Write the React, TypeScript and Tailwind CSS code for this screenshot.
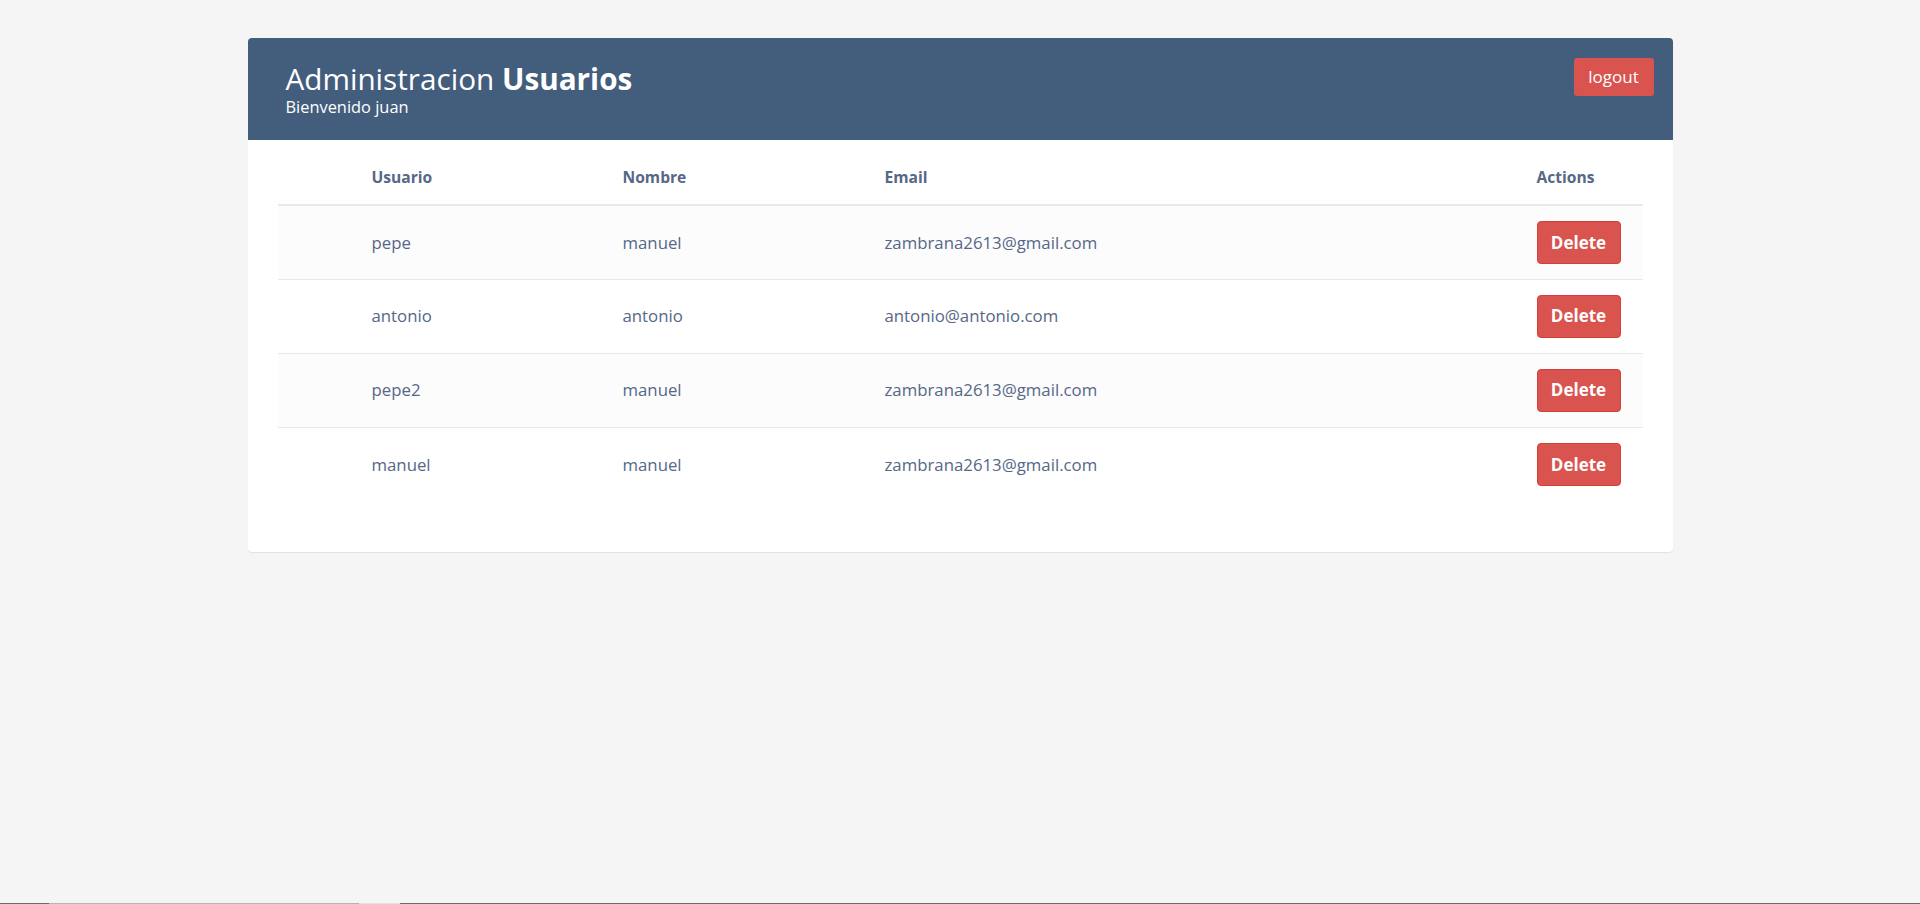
const users = [
  { usuario: "pepe", nombre: "manuel", email: "zambrana2613@gmail.com" },
  { usuario: "antonio", nombre: "antonio", email: "antonio@antonio.com" },
  { usuario: "pepe2", nombre: "manuel", email: "zambrana2613@gmail.com" },
  { usuario: "manuel", nombre: "manuel", email: "zambrana2613@gmail.com" },
];

function Header() {
  return (
    <div className="-mx-[30px] flex h-[102px] justify-between rounded-t-[4px] bg-[#435d7d] pl-[38px] pr-[19px] text-white">
      <div className="pt-[23px]">
        <h2 className="text-[29.7px] leading-[36px]">
          Administracion <b className="font-bold">Usuarios</b>
        </h2>
        <p className="text-[16.4px] leading-[20px]">Bienvenido juan</p>
      </div>
      <div className="pt-[20px]">
        <button className="h-[38px] w-[80px] rounded-[3px] bg-[#d9534f] text-[17px] text-white">
          logout
        </button>
      </div>
    </div>
  );
}

function UsersTable() {
  return (
    <table className="mt-[12px] w-full table-fixed border-collapse text-left text-[16.8px]">
      <colgroup>
        <col className="w-[76px]" />
        <col className="w-[251px]" />
        <col className="w-[262px]" />
        <col />
        <col className="w-[124px]" />
      </colgroup>
      <thead>
        <tr className="border-b-[2px] border-[#e9e9e9] text-[15.6px]">
          <th />
          <th className="h-[53px] px-[18px] font-bold">Usuario</th>
          <th className="px-[18px] font-bold">Nombre</th>
          <th className="px-[18px] font-bold">Email</th>
          <th className="px-[18px] font-bold">Actions</th>
        </tr>
      </thead>
      <tbody>
        {users.map((u, i) => (
          <tr
            key={u.usuario}
            className={
              (i % 2 === 0 ? "bg-[#fcfcfc] " : "bg-white ") +
              (i > 0 ? "border-t border-[#e9e9e9]" : "")
            }
          >
            <td className="h-[74px]" />
            <td className="px-[18px]">{u.usuario}</td>
            <td className="px-[18px]">{u.nombre}</td>
            <td className="px-[18px]">{u.email}</td>
            <td className="px-[18px]">
              <button className="h-[43px] w-[84px] rounded-[4px] border border-[#d43f3a] bg-[#d9534f] text-[17px] font-bold text-white">
                Delete
              </button>
            </td>
          </tr>
        ))}
      </tbody>
    </table>
  );
}

export default function App() {
  return (
    <div className="min-h-screen bg-[#f5f5f5] font-['Open_Sans',sans-serif] text-[#566787]">
      <div className="mx-auto w-[1425px] pt-[38px]">
        <div className="rounded-[4px] bg-white px-[30px] pb-[51px] shadow-[0_1px_1px_rgba(0,0,0,0.08)]">
          <Header />
          <UsersTable />
        </div>
      </div>
      <div className="fixed bottom-0 left-0 flex h-px w-full">
        <div className="w-[49px] bg-[#6b6b6b]" />
        <div className="w-[310px] bg-[#b5b5b5]" />
        <div className="w-[41px] bg-[#e0e0e0]" />
        <div className="flex-1 bg-[#6b6b6b]" />
      </div>
    </div>
  );
}
